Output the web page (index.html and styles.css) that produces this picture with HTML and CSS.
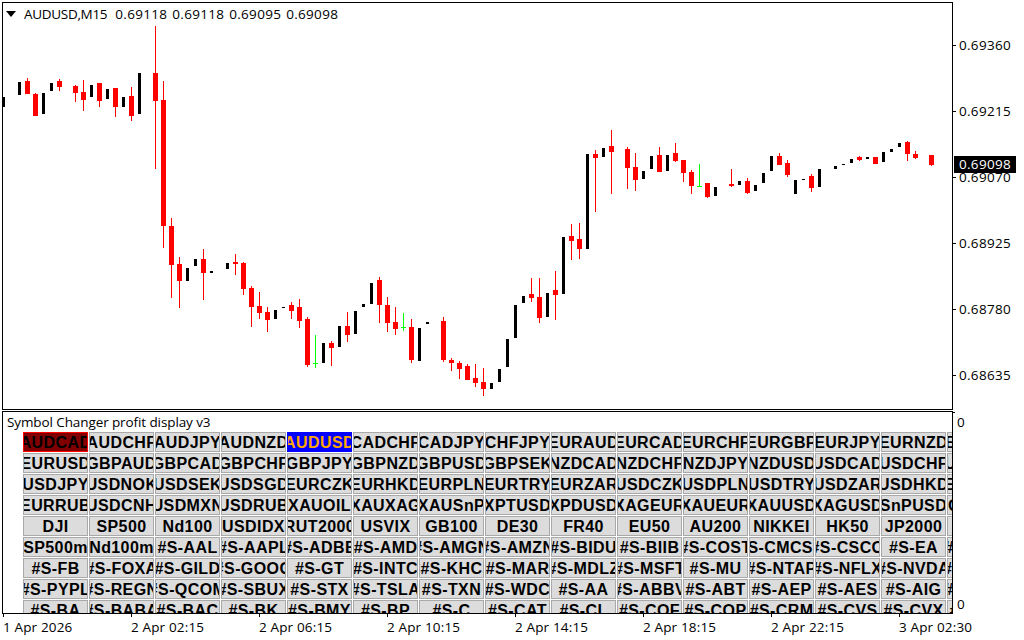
FILE: index.html
```html
<!DOCTYPE html>
<html lang="en">
<head>
<meta charset="utf-8">
<title>AUDUSD,M15</title>
<link rel="stylesheet" href="styles.css">
</head>
<body>
<div class="terminal">
  <section class="pane main-pane">
    <div class="chart-head">
      <span class="caret"></span>
      <span class="chart-symbol">AUDUSD,M15</span>
      <span class="chart-ohlc">0.69118</span>
      <span class="chart-ohlc">0.69118</span>
      <span class="chart-ohlc">0.69095</span>
      <span class="chart-ohlc">0.69098</span>
    </div>
    <svg class="candles" viewBox="3 3 949 406" width="949" height="406" aria-hidden="true">
      <path class="wick-red" d="M27.5 78V94M35.5 93V116M59.5 79V91M75.5 85V102M83.5 80V111M99.5 83V107M115.5 88V117M131.5 87V121M155.5 26V169M163.5 81V248M171.5 218V298M179.5 257V308M203.5 249V300M235.5 254V275M243.5 262V295M251.5 286V327M259.5 292V319M267.5 307V332M291.5 302V319M299.5 299V328M307.5 317V367M331.5 341V366M347.5 312V342M379.5 277V323M387.5 297V332M395.5 307V335M411.5 319V363M443.5 317V362M451.5 358V371M459.5 361V379M467.5 364V380M475.5 364V387M483.5 368V396M531.5 278V302M539.5 278V323M555.5 271V320M571.5 224V260M579.5 223V259M595.5 150V212M611.5 130V194M627.5 147V189M635.5 153V191M659.5 147V172M675.5 143V162M683.5 160V182M691.5 170V194M707.5 183V198M731.5 169V187M747.5 178V194M779.5 153V165M787.5 160V177M811.5 174V192M859.5 156V161M907.5 141V161M915.5 151V159M931.5 155V166"/>
      <path class="body-red" d="M27.5 81V94M35.5 94V116M59.5 81V87M75.5 86V93M83.5 92V100M99.5 83V101M115.5 88V107M131.5 96V116M155.5 73V101M163.5 100V226M171.5 226V265M179.5 264V281M203.5 259V273M235.5 262V264M243.5 263V289M251.5 288V307M259.5 306V313M267.5 312V320M291.5 305V311M299.5 307V321M307.5 319V365M331.5 343V348M347.5 326V335M379.5 280V305M387.5 305V323M395.5 322V329M411.5 327V360M443.5 321V360M451.5 360V363M459.5 363V369M467.5 366V380M475.5 378V383M483.5 382V389M531.5 294V298M539.5 297V318M555.5 290V295M571.5 236V241M579.5 239V249M595.5 154V158M611.5 146V152M627.5 149V168M635.5 167V180M659.5 155V172M675.5 153V161M683.5 160V173M691.5 172V186M707.5 183V197M731.5 184V186M747.5 181V193M779.5 156V165M787.5 163V175M811.5 176V188M859.5 157V160M875.5 157V164M907.5 142V154M915.5 154V158M931.5 155V165"/>
      <path class="body-black" d="M3.5 97V107M19.5 82V95M43.5 93V114M51.5 83V91M91.5 85V97M107.5 89V99M123.5 97V107M139.5 73V114M187.5 268V281M195.5 259V266M211.5 271V273M227.5 263V269M275.5 310V319M283.5 307V308M323.5 343V363M339.5 326V347M355.5 311V334M363.5 304V307M371.5 283V304M419.5 328V361M427.5 322V324M491.5 383V389M499.5 369V382M507.5 339V367M515.5 305V338M523.5 296V303M547.5 293V317M563.5 237V294M587.5 154V249M603.5 148V157M643.5 171V179M651.5 156V169M667.5 155V171M715.5 187V196M739.5 181V185M755.5 185V191M763.5 173V183M771.5 156V171M795.5 180V194M803.5 179V180M819.5 169V187M835.5 166V169M843.5 164V165M851.5 159V163M867.5 157V159M883.5 152V162M891.5 149V152M899.5 143V147"/>
      <path class="wick-green" d="M315.5 335V368M313 363.5H318M403.5 313V331M401 327.5H406M699.5 164V187M697 186.5H702"/>
    </svg>
  </section>
  <aside class="price-axis">
    <div class="price-tick">0.69360</div>
    <div class="price-tick">0.69215</div>
    <div class="price-tick">0.69070</div>
    <div class="price-tick">0.68925</div>
    <div class="price-tick">0.68780</div>
    <div class="price-tick">0.68635</div>
    <div class="price-now">0.69098</div>
  </aside>
  <section class="pane sub-pane">
    <div class="sub-title">Symbol Changer profit display v3</div>
    <div class="symbols">
      <div class="sym sym-current">AUDCAD</div><div class="sym">AUDCHF</div><div class="sym">AUDJPY</div><div class="sym">AUDNZD</div><div class="sym sym-chart">AUDUSD</div><div class="sym">CADCHF</div><div class="sym">CADJPY</div><div class="sym">CHFJPY</div><div class="sym">EURAUD</div><div class="sym">EURCAD</div><div class="sym">EURCHF</div><div class="sym">EURGBP</div><div class="sym">EURJPY</div><div class="sym">EURNZD</div><div class="sym">EURSEK</div>
      <div class="sym">EURUSD</div><div class="sym">GBPAUD</div><div class="sym">GBPCAD</div><div class="sym">GBPCHF</div><div class="sym">GBPJPY</div><div class="sym">GBPNZD</div><div class="sym">GBPUSD</div><div class="sym">GBPSEK</div><div class="sym">NZDCAD</div><div class="sym">NZDCHF</div><div class="sym">NZDJPY</div><div class="sym">NZDUSD</div><div class="sym">USDCAD</div><div class="sym">USDCHF</div><div class="sym">USDCNY</div>
      <div class="sym">USDJPY</div><div class="sym">USDNOK</div><div class="sym">USDSEK</div><div class="sym">USDSGD</div><div class="sym">EURCZK</div><div class="sym">EURHKD</div><div class="sym">EURPLN</div><div class="sym">EURTRY</div><div class="sym">EURZAR</div><div class="sym">USDCZK</div><div class="sym">USDPLN</div><div class="sym">USDTRY</div><div class="sym">USDZAR</div><div class="sym">USDHKD</div><div class="sym">EURDKK</div>
      <div class="sym">EURRUB</div><div class="sym">USDCNH</div><div class="sym">USDMXN</div><div class="sym">USDRUB</div><div class="sym">XAUOIL</div><div class="sym">XAUXAG</div><div class="sym">XAUSnP</div><div class="sym">XPTUSD</div><div class="sym">XPDUSD</div><div class="sym">XAGEUR</div><div class="sym">XAUEUR</div><div class="sym">XAUUSD</div><div class="sym">XAGUSD</div><div class="sym">SnPUSD</div><div class="sym">OILUSD</div>
      <div class="sym">DJI</div><div class="sym">SP500</div><div class="sym">Nd100</div><div class="sym">USDIDX</div><div class="sym">RUT2000</div><div class="sym">USVIX</div><div class="sym">GB100</div><div class="sym">DE30</div><div class="sym">FR40</div><div class="sym">EU50</div><div class="sym">AU200</div><div class="sym">NIKKEI</div><div class="sym">HK50</div><div class="sym">JP2000</div><div class="sym"></div>
      <div class="sym">SP500m</div><div class="sym">Nd100m</div><div class="sym">#S-AAL</div><div class="sym">#S-AAPL</div><div class="sym">#S-ADBE</div><div class="sym">#S-AMD</div><div class="sym">#S-AMGN</div><div class="sym">#S-AMZN</div><div class="sym">#S-BIDU</div><div class="sym">#S-BIIB</div><div class="sym">#S-COST</div><div class="sym">#S-CMCSA</div><div class="sym">#S-CSCO</div><div class="sym">#S-EA</div><div class="sym">#S-EBAY</div>
      <div class="sym">#S-FB</div><div class="sym">#S-FOXA</div><div class="sym">#S-GILD</div><div class="sym">#S-GOOG</div><div class="sym">#S-GT</div><div class="sym">#S-INTC</div><div class="sym">#S-KHC</div><div class="sym">#S-MAR</div><div class="sym">#S-MDLZ</div><div class="sym">#S-MSFT</div><div class="sym">#S-MU</div><div class="sym">#S-NTAP</div><div class="sym">#S-NFLX</div><div class="sym">#S-NVDA</div><div class="sym">#S-ORCL</div>
      <div class="sym">#S-PYPL</div><div class="sym">#S-REGN</div><div class="sym">#S-QCOM</div><div class="sym">#S-SBUX</div><div class="sym">#S-STX</div><div class="sym">#S-TSLA</div><div class="sym">#S-TXN</div><div class="sym">#S-WDC</div><div class="sym">#S-AA</div><div class="sym">#S-ABBV</div><div class="sym">#S-ABT</div><div class="sym">#S-AEP</div><div class="sym">#S-AES</div><div class="sym">#S-AIG</div><div class="sym">#S-ALXN</div>
      <div class="sym">#S-BA</div><div class="sym">#S-BABA</div><div class="sym">#S-BAC</div><div class="sym">#S-BK</div><div class="sym">#S-BMY</div><div class="sym">#S-BP</div><div class="sym">#S-C</div><div class="sym">#S-CAT</div><div class="sym">#S-CL</div><div class="sym">#S-COF</div><div class="sym">#S-COP</div><div class="sym">#S-CRM</div><div class="sym">#S-CVS</div><div class="sym">#S-CVX</div><div class="sym">#S-DAL</div>
    </div>
  </section>
  <aside class="sub-axis">
    <div>0</div>
    <div>0</div>
  </aside>
  <footer class="time-axis">
    <div class="time-tick">1 Apr 2026</div>
    <div class="time-tick">2 Apr 02:15</div>
    <div class="time-tick">2 Apr 06:15</div>
    <div class="time-tick">2 Apr 10:15</div>
    <div class="time-tick">2 Apr 14:15</div>
    <div class="time-tick">2 Apr 18:15</div>
    <div class="time-tick">2 Apr 22:15</div>
    <div class="time-tick">3 Apr 02:30</div>
  </footer>
</div>
</body>
</html>
```
FILE: styles.css
```css
* { box-sizing: border-box; }
html, body { margin: 0; background: #fff; }
body {
  width: 1024px;
  height: 640px;
  overflow: hidden;
  font: 13.5px/15px "Open Sans", "DejaVu Sans", sans-serif;
  color: #000;
}
.terminal {
  display: grid;
  grid-template-columns: 951px 71px;
  grid-template-rows: 408px 203px 26px;
  row-gap: 1px;
  padding: 2px 0 0 2px;
  height: 640px;
}
.pane {
  position: relative;
  border: 1px solid #000;
  overflow: hidden;
  background: #fff;
}
.main-pane { grid-column: 1; grid-row: 1; }
.sub-pane { grid-column: 1; grid-row: 2; }
.candles { display: block; shape-rendering: crispEdges; fill: none; }
.wick-red { stroke: #f00; stroke-width: 1; }
.body-red { stroke: #f00; stroke-width: 5; }
.body-black { stroke: #000; stroke-width: 3; }
.wick-green { stroke: #0f0; stroke-width: 1; }
.chart-head {
  position: absolute;
  left: 3px;
  top: 4px;
  display: flex;
  align-items: center;
  gap: 5px;
  height: 14px;
}
.caret {
  width: 0;
  height: 0;
  margin-right: 3px;
  border-left: 5.5px solid transparent;
  border-right: 5.5px solid transparent;
  border-top: 6px solid #000;
}
.chart-symbol { margin-right: 3px; letter-spacing: -0.3px; }
.chart-ohlc { letter-spacing: 0.3px; }
.price-axis {
  grid-column: 2;
  grid-row: 1;
  position: relative;
  padding-top: 36px;
  letter-spacing: 0.3px;
}
.price-tick {
  position: relative;
  height: 66px;
  padding: 0 0 0 6px;
  line-height: 15px;
}
.price-tick::before {
  content: "";
  position: absolute;
  left: 0;
  top: 7px;
  width: 3px;
  height: 1px;
  background: #000;
}
.price-now {
  position: absolute;
  left: 1px;
  top: 154px;
  width: 62px;
  height: 17px;
  padding: 1px 0 0 5px;
  background: #000;
  color: #fff;
  line-height: 15px;
}
.sub-title {
  height: 20px;
  padding: 3px 0 0 4px;
  line-height: 15px;
  letter-spacing: -0.1px;
  white-space: nowrap;
}
.symbols {
  display: grid;
  grid-template-columns: repeat(15, 65px);
  grid-auto-rows: 20px;
  gap: 1px;
  padding-left: 20px;
  width: max-content;
}
.sym {
  display: flex;
  align-items: center;
  justify-content: center;
  overflow: hidden;
  white-space: nowrap;
  padding-top: 1px;
  background: #dcdcdc;
  border: 1px solid #a9a9a9;
  font: bold 16px/18px "Liberation Sans", Arial, sans-serif;
  letter-spacing: 0.4px;
  color: #000;
}
.sym-current { background: #800000; border-color: #f00; }
.sym-chart { background: #00f; border-color: #00f; color: #ffa500; }
.sub-axis {
  grid-column: 2;
  grid-row: 2;
  position: relative;
  display: flex;
  flex-direction: column;
  justify-content: space-between;
  padding: 4px 0 2px 4px;
  line-height: 15px;
}
.sub-axis::before {
  content: "";
  position: absolute;
  left: 0;
  top: 1px;
  width: 2px;
  height: 1px;
  background: #000;
}
.time-axis {
  grid-column: 1 / -1;
  grid-row: 3;
  display: flex;
  margin-top: -1px;
  padding-left: 1px;
  letter-spacing: 0.15px;
}
.time-tick {
  position: relative;
  flex: 0 0 128px;
  padding-top: 6px;
  line-height: 15px;
  white-space: nowrap;
}
.time-tick::before {
  content: "";
  position: absolute;
  left: 0;
  top: 0;
  width: 1px;
  height: 3px;
  background: #000;
}
```
